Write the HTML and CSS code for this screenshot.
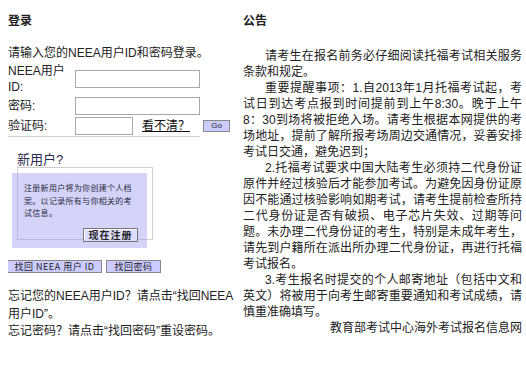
FILE: index.html
```html
<!DOCTYPE html>
<html lang="zh-CN">
<head>
    <meta charset="UTF-8">
    <title>NEEA 登录</title>
    <link rel="stylesheet" href="styles.css">
</head>
<body>

<div class="page">
    <!-- 登录 -->
    <div class="left">
        <h3>登录</h3>
        <p class="intro">请输入您的NEEA用户ID和密码登录。</p>
        <form class="login" action="#" method="POST">
            <label for="uid">NEEA用户ID:</label>
            <input type="text" id="uid" class="field">

            <label for="pwd">密码:</label>
            <input type="password" id="pwd" class="field">

            <label for="code">验证码:</label>
            <div class="code-cell">
                <input type="text" id="code" class="field short">
                <a href="#" class="refresh">看不清？</a>
                <button type="submit" class="go">Go</button>
            </div>
        </form>
        <div class="rule"></div>

        <!-- 新用户 -->
        <div class="new-user">
            <div class="new-title">新用户?</div>
            <div class="frame">
                <div class="panel">
                    <p>注册新用户将为你创建个人档案。以记录所有与你相关的考试信息。</p>
                    <button class="reg">现在注册</button>
                </div>
            </div>
        </div>

        <div class="find">
            <button class="find-btn wide">找回 NEEA 用户 ID</button>
            <button class="find-btn">找回密码</button>
        </div>

        <p class="tips">忘记您的NEEA用户ID？请点击“找回NEEA用户ID”。<br>忘记密码？请点击“找回密码”重设密码。</p>
    </div>

    <!-- 公告 -->
    <div class="right">
        <h3>公告</h3>
        <div class="notice">
            <p>请考生在报名前务必仔细阅读托福考试相关服务条款和规定。</p>
            <p>重要提醒事项：1.自2013年1月托福考试起，考试日到达考点报到时间提前到上午8:30。晚于上午8：30到场将被拒绝入场。请考生根据本网提供的考场地址，提前了解所报考场周边交通情况，妥善安排考试日交通，避免迟到；</p>
            <p>2.托福考试要求中国大陆考生必须持二代身份证原件并经过核验后才能参加考试。为避免因身份证原因不能通过核验影响如期考试，请考生提前检查所持二代身份证是否有破损、电子芯片失效、过期等问题。未办理二代身份证的考生，特别是未成年考生，请先到户籍所在派出所办理二代身份证，再进行托福考试报名。</p>
            <p>3.考生报名时提交的个人邮寄地址（包括中文和英文）将被用于向考生邮寄重要通知和考试成绩，请慎重准确填写。</p>
            <p class="sign">教育部考试中心海外考试报名信息网</p>
        </div>
    </div>
</div>

</body>
</html>
```

FILE: styles.css
```css
body {
    font-family: "Liberation Sans", "Noto Sans CJK SC", sans-serif;
    font-size: 12px;
    line-height: 16px;
    color: #222;
    background-color: #fff;
    margin: 8px 4px 8px 8px;
}
.page {
    display: flex;
    gap: 7px;
}
.left {
    width: 228px;
    flex-shrink: 0;
}
.right {
    width: 279px;
    flex-shrink: 0;
}
h3 {
    font-size: 12px;
    font-weight: bold;
    margin: 5px 0 0;
    line-height: 16px;
}
.intro {
    margin: 16px 0 0;
}

/* Форма входа */
.login {
    display: grid;
    grid-template-columns: 62px auto;
    column-gap: 5px;
    row-gap: 2px;
    align-items: center;
    margin-top: 2px;
}
.login label {
    line-height: 16px;
}
.field {
    width: 125px;
    height: 18px;
    box-sizing: border-box;
    border: 1px solid #a9a9a9;
    padding: 0 2px;
    margin: 0;
    font-size: 12px;
}
.field.short {
    width: 58px;
}
.code-cell {
    display: flex;
    align-items: center;
}
.refresh {
    color: #111;
    text-decoration: underline;
    margin-left: 9px;
}
.go {
    margin-left: 13px;
    width: 27px;
    height: 12px;
    padding: 0;
    font-family: "Liberation Sans", sans-serif;
    font-size: 8px;
    line-height: 10px;
    background-color: #ccccff;
    border: 1px solid #888;
    color: #222;
}
.rule {
    width: 192px;
    border-top: 1px solid #cfcfcf;
    margin-top: 1px;
}

/* Новый пользователь */
.new-user {
    margin-top: 16px;
    padding-left: 9px;
}
.new-title {
    font-size: 13px;
    line-height: 14px;
    color: #2b2b4f;
}
.frame {
    width: 134px;
    height: 71px;
    border: 1px solid #cfcfcf;
}
.panel {
    width: 135px;
    height: 75px;
    box-sizing: border-box;
    margin: 5px 0 0 -6px;
    padding: 10px 9px 0 12px;
    background-color: rgba(160, 160, 245, 0.45);
    display: flex;
    flex-direction: column;
}
.panel p {
    margin: 0;
    font-size: 8px;
    line-height: 12.5px;
    letter-spacing: 0.3px;
    color: #2a2a40;
}
.reg {
    align-self: flex-end;
    margin-top: 7px;
    width: 55px;
    height: 14px;
    padding: 0;
    font-family: "Noto Sans CJK SC", sans-serif;
    font-size: 10px;
    font-weight: bold;
    line-height: 12px;
    letter-spacing: 1px;
    color: #222;
    background-color: #dcdcfc;
    border: 1px solid #777;
    box-shadow: inset 1px 1px #fff;
}

/* Восстановление */
.find {
    display: flex;
    gap: 4px;
    margin: 20px 0 0 -1px;
}
.find-btn {
    width: 55px;
    height: 13px;
    padding: 0;
    font-family: "Noto Sans CJK SC", sans-serif;
    font-size: 9px;
    line-height: 11px;
    letter-spacing: 0.5px;
    color: #222;
    background-color: #ccccff;
    border: 1px solid #888;
}
.find-btn.wide {
    width: 95px;
}
.tips {
    margin: 15px 0 0;
    line-height: 17.5px;
}

/* Объявление */
.notice {
    margin-top: 19px;
    text-align: justify;
}
.notice p {
    margin: 0;
    text-indent: 22px;
}
.notice p.sign {
    text-align: right;
    text-indent: 0;
}
```
